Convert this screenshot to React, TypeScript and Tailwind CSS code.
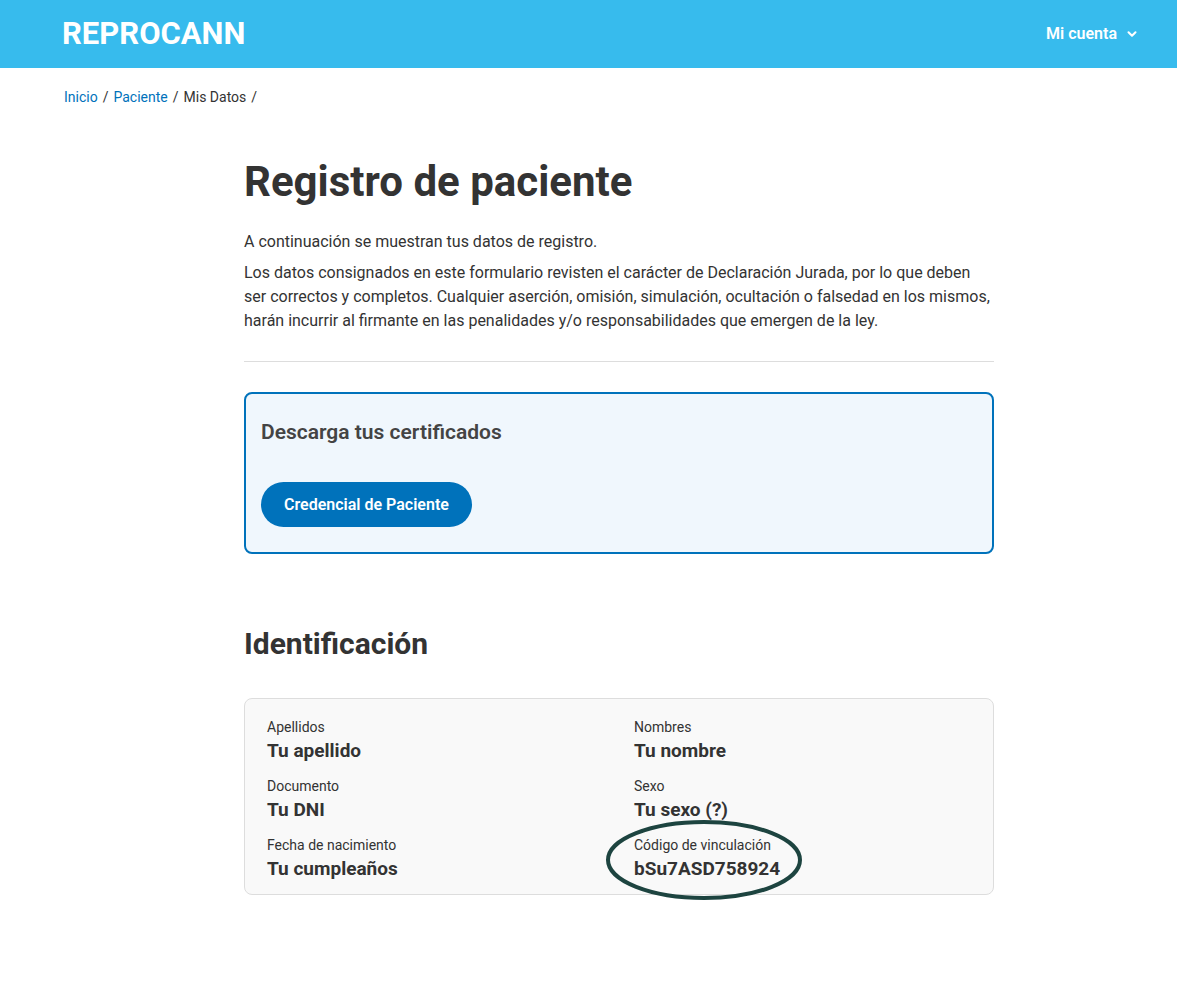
import { ChevronDown } from "lucide-react"

const fields = [
  { label: "Apellidos", value: "Tu apellido" },
  { label: "Nombres", value: "Tu nombre" },
  { label: "Documento", value: "Tu DNI" },
  { label: "Sexo", value: "Tu sexo (?)" },
  { label: "Fecha de nacimiento", value: "Tu cumpleaños" },
  { label: "Código de vinculación", value: "bSu7ASD758924", circled: true },
]

export default function App() {
  return (
    <div className="min-h-screen bg-white text-[#333] font-['Roboto',sans-serif]">
      {/* Header */}
      <header className="h-[68px] bg-[#37bbed] flex items-center justify-between pl-[62px] pr-[38px]">
        <span className="text-white text-[31px] font-bold">REPROCANN</span>
        <button className="flex items-center gap-2 text-white text-[16px] font-semibold">
          Mi cuenta
          <ChevronDown size={14} strokeWidth={3.5} />
        </button>
      </header>

      {/* Breadcrumb */}
      <nav className="pl-[64px] pt-[19px] text-[14px] flex gap-[5px]">
        <a className="text-[#0072bb]">Inicio</a>
        <span>/</span>
        <a className="text-[#0072bb]">Paciente</a>
        <span>/</span>
        <span>Mis Datos</span>
        <span>/</span>
      </nav>

      <main className="w-[750px] ml-[244px] pt-[48px] pb-20">
        <h1 className="text-[42px] font-bold leading-tight text-[#333]">Registro de paciente</h1>
        <p className="mt-[21px] text-[16px] leading-[24px]">A continuación se muestran tus datos de registro.</p>
        <p className="mt-[7px] text-[16px] leading-[24px]">
          Los datos consignados en este formulario revisten el carácter de Declaración Jurada, por lo que deben ser correctos y completos. Cualquier aserción, omisión, simulación, ocultación o falsedad en los mismos, harán incurrir al firmante en las penalidades y/o responsabilidades que emergen de la ley.
        </p>
        <hr className="mt-[28px] border-t border-[#ddd]" />

        {/* Certificados */}
        <section className="mt-[30px] border-2 border-[#0072bb] bg-[#f0f7fd] rounded-lg px-[15px] pt-[23px] pb-[25px]">
          <h3 className="text-[21px] font-semibold text-[#444]">Descarga tus certificados</h3>
          <button className="mt-[34px] h-[45px] px-[23px] rounded-full bg-[#0072bb] text-white text-[16px] font-semibold">
            Credencial de Paciente
          </button>
        </section>

        <h2 className="mt-[67px] text-[30px] font-bold text-[#333]">Identificación</h2>

        <section className="mt-[32px] bg-[#f9f9f9] border border-[#ddd] rounded-lg px-[22px] pt-[18px] pb-[11px] grid grid-cols-[367px_1fr] gap-y-[11px]">
          {fields.map(f => (
            <div key={f.label} className="relative">
              <div className="text-[14px] leading-[20px]">{f.label}</div>
              <div className="text-[19px] font-bold leading-[28px] text-[#333]">{f.value}</div>
              {f.circled && (
                <svg className="absolute -left-[29px] -top-[16px] pointer-events-none" width="198" height="82" viewBox="0 0 198 82">
                  <ellipse cx="99" cy="41" rx="96" ry="38" fill="none" stroke="#1d4440" strokeWidth="4" />
                </svg>
              )}
            </div>
          ))}
        </section>
      </main>
    </div>
  )
}
